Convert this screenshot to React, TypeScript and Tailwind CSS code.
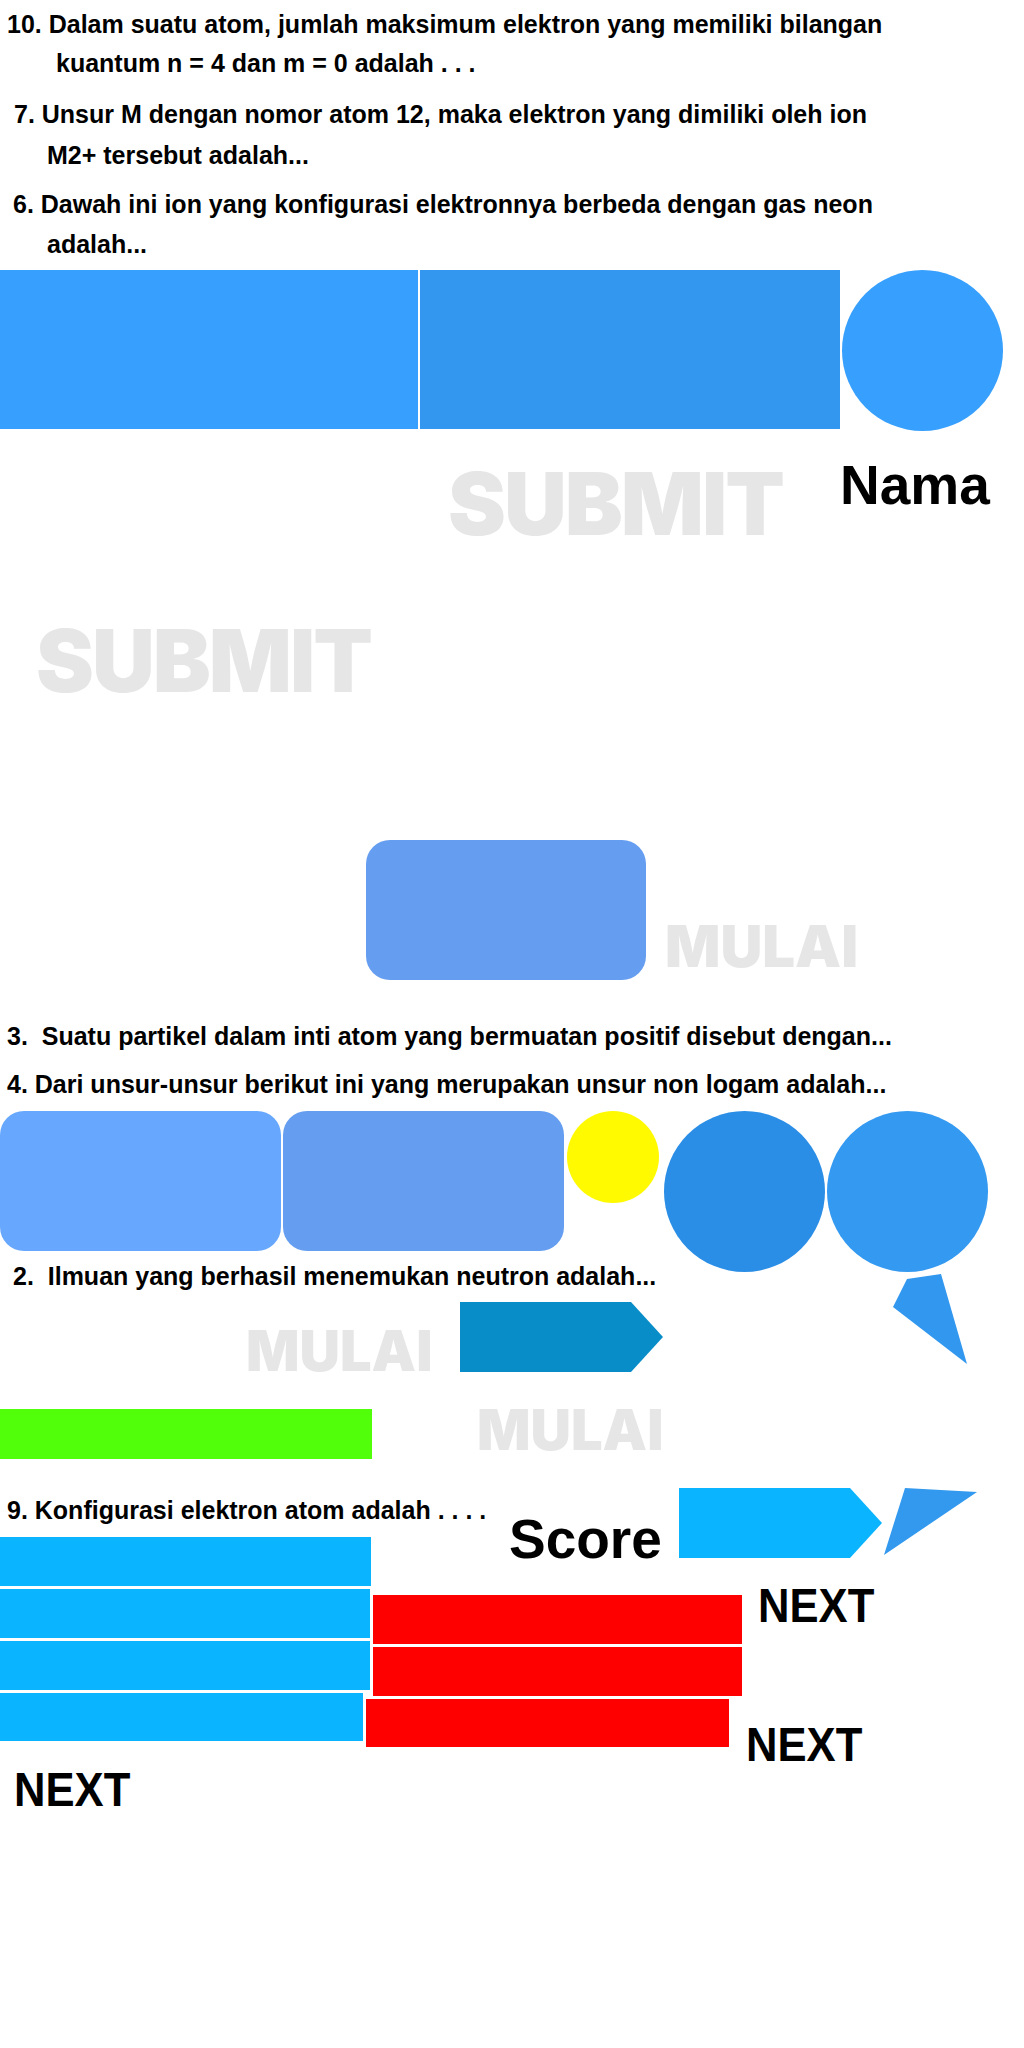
import React from 'react';

const q = "whitespace-pre font-bold text-[25px] leading-none text-black [font-family:'Liberation_Sans',Arial,sans-serif]";
const big = "absolute whitespace-pre font-bold leading-none text-black [font-family:'Liberation_Sans',Arial,sans-serif]";
const ghost = "absolute whitespace-pre font-black leading-none text-[#e6e6e6] [font-family:Inter,'Liberation_Sans',sans-serif]";

const App: React.FC = () => {
  return (
    <div className="relative w-[1024px] h-[2048px] bg-white overflow-hidden">
      {/* pertanyaan atas + baris biru */}
      <div className="flex flex-col items-start pt-[12px]">
        <div className={`${q} ml-[7px]`}>10. Dalam suatu atom, jumlah maksimum elektron yang memiliki bilangan</div>
        <div className={`${q} ml-[56px] mt-[14px]`}>kuantum n = 4 dan m = 0 adalah . . .</div>
        <div className={`${q} ml-[14px] mt-[26px]`}>7. Unsur M dengan nomor atom 12, maka elektron yang dimiliki oleh ion</div>
        <div className={`${q} ml-[47px] mt-[16px]`}>M2+ tersebut adalah...</div>
        <div className={`${q} ml-[13px] mt-[24px]`}>6. Dawah ini ion yang konfigurasi elektronnya berbeda dengan gas neon</div>
        <div className={`${q} ml-[47px] mt-[15px]`}>adalah...</div>

        <div className="mt-[13px] flex items-start gap-[2px]">
          <div className="w-[418px] h-[159px] bg-[#37a0fe]" />
          <div className="w-[420px] h-[159px] bg-[#3397ef]" />
          <div className="w-[161px] h-[161px] rounded-full bg-[#37a0fe]" />
        </div>
      </div>

      <div className={`${ghost} left-[448px] top-[460px] text-[87px] tracking-[-2px]`}>SUBMIT</div>
      <div className={`${big} left-[840px] top-[458px] text-[55px]`}>Nama</div>

      <div className={`${ghost} left-[36px] top-[617px] text-[87px] tracking-[-2px]`}>SUBMIT</div>

      <div className="absolute left-[366px] top-[840px] w-[280px] h-[140px] rounded-[24px] bg-[#659ef0]" />
      <div className={`${ghost} left-[665px] top-[917px] text-[58px]`}>MULAI</div>

      {/* pertanyaan 3 & 4 + pilihan */}
      <div className="absolute left-0 top-[1024px] flex flex-col items-start">
        <div className={`${q} ml-[7px]`}>3.  Suatu partikel dalam inti atom yang bermuatan positif disebut dengan...</div>
        <div className={`${q} ml-[7px] mt-[23px]`}>4. Dari unsur-unsur berikut ini yang merupakan unsur non logam adalah...</div>
        <div className="mt-[14px] flex items-start">
          <div className="w-[281px] h-[140px] rounded-[24px] bg-[#67a8fe]" />
          <div className="ml-[2px] w-[281px] h-[140px] rounded-[24px] bg-[#659ef0]" />
          <div className="ml-[3px] w-[92px] h-[92px] rounded-full bg-[#fffa00]" />
          <div className="ml-[5px] w-[161px] h-[161px] rounded-full bg-[#2a8de6]" />
          <div className="ml-[2px] w-[161px] h-[161px] rounded-full bg-[#3399f1]" />
        </div>
      </div>

      <svg className="absolute left-[888px] top-[1270px]" width="85" height="100" viewBox="0 0 85 100">
        <polygon points="19,9 53,4 79,94 5,37" fill="#3297ee" />
      </svg>

      <div className={`absolute ${q} left-[13px] top-[1264px]`}>2.  Ilmuan yang berhasil menemukan neutron adalah...</div>

      <div className={`${ghost} left-[246px] top-[1323px] text-[56px]`}>MULAI</div>
      <svg className="absolute left-[460px] top-[1302px]" width="203" height="70" viewBox="0 0 203 70">
        <polygon points="0,0 171,0 203,35 171,70 0,70" fill="#088dc8" />
      </svg>

      <div className="absolute left-0 top-[1409px] w-[372px] h-[50px] bg-[#52ff0a]" />
      <div className={`${ghost} left-[477px] top-[1402px] text-[56px]`}>MULAI</div>

      <div className={`absolute ${q} left-[7px] top-[1498px]`}>9. Konfigurasi elektron atom adalah . . . .</div>
      <div className={`${big} left-[509px] top-[1512px] text-[55px]`}>Score</div>
      <svg className="absolute left-[679px] top-[1488px]" width="203" height="70" viewBox="0 0 203 70">
        <polygon points="0,0 171,0 203,35 171,70 0,70" fill="#0ab4fe" />
      </svg>
      <svg className="absolute left-[880px] top-[1485px]" width="100" height="75" viewBox="0 0 100 75">
        <polygon points="25,3 97,7 4,70" fill="#3399ee" />
      </svg>

      {/* pilihan jawaban */}
      <div className="absolute left-0 top-[1537px] flex items-start">
        <div className="flex flex-col gap-[3px]">
          <div className="w-[371px] h-[49px] bg-[#0ab4fe]" />
          <div className="w-[370px] h-[49px] bg-[#0ab4fe]" />
          <div className="w-[370px] h-[49px] bg-[#0ab4fe]" />
          <div className="w-[363px] h-[48px] bg-[#0ab4fe]" />
        </div>
        <div className="mt-[58px] flex flex-col gap-[3px]">
          <div className="ml-[2px] w-[369px] h-[49px] bg-[#ff0000]" />
          <div className="ml-[2px] w-[369px] h-[49px] bg-[#ff0000]" />
          <div className="-ml-[5px] w-[363px] h-[48px] bg-[#ff0000]" />
        </div>
      </div>

      <div className={`${big} left-[758px] top-[1581px] text-[49px] scale-x-[0.89] origin-left`}>NEXT</div>
      <div className={`${big} left-[746px] top-[1720px] text-[49px] scale-x-[0.89] origin-left`}>NEXT</div>
      <div className={`${big} left-[14px] top-[1765px] text-[49px] scale-x-[0.89] origin-left`}>NEXT</div>
    </div>
  );
};

export default App;
